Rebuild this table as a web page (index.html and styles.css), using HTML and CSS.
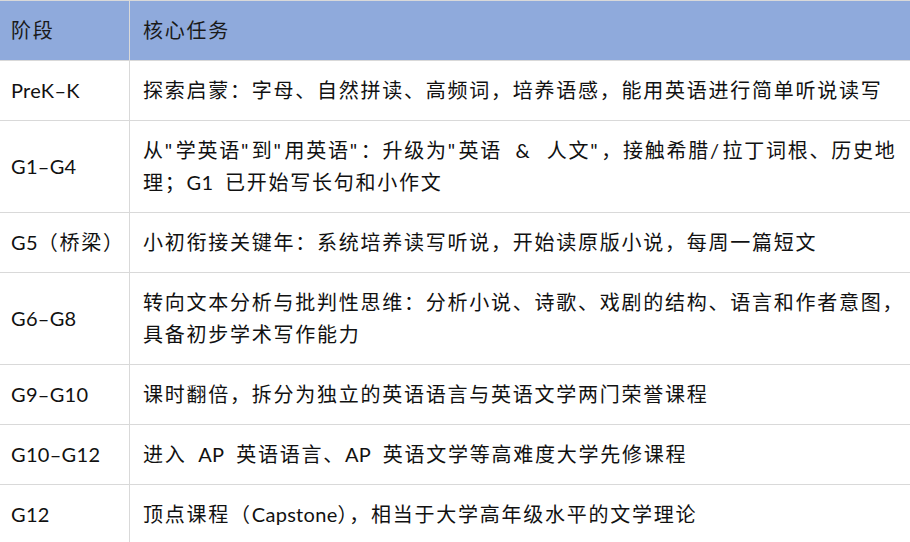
FILE: index.html
```html
<!DOCTYPE html>
<html lang="zh">
<head>
<meta charset="utf-8">
<link rel="stylesheet" href="styles.css">
</head>
<body>
<table class="plan">
  <thead>
    <tr><th class="stage">阶段</th><th class="task">核心任务</th></tr>
  </thead>
  <tbody>
    <tr><td class="stage"><span class="en">PreK–K</span></td><td class="task">探索启蒙：字母、自然拼读、高频词，培养语感，能用英语进行简单听说读写</td></tr>
    <tr><td class="stage"><span class="en">G1–G4</span></td><td class="task">从<span class="p">"</span>学英语<span class="p">"</span>到<span class="p">"</span>用英语<span class="p">"</span>：升级为<span class="p">"</span>英语<span class="p">&ensp;&amp;&ensp;</span>人文<span class="p">"</span>，接触希腊<span class="p">/</span>拉丁词根、历史地理；<span class="en">G1</span>&ensp;已开始写长句和小作文</td></tr>
    <tr><td class="stage"><span class="en">G5</span>（桥梁）</td><td class="task">小初衔接关键年：系统培养读写听说，开始读原版小说，每周一篇短文</td></tr>
    <tr><td class="stage"><span class="en">G6–G8</span></td><td class="task">转向文本分析与批判性思维：分析小说、诗歌、戏剧的结构、语言和作者意图，具备初步学术写作能力</td></tr>
    <tr><td class="stage"><span class="en">G9–G10</span></td><td class="task">课时翻倍，拆分为独立的英语语言与英语文学两门荣誉课程</td></tr>
    <tr><td class="stage"><span class="en">G10–G12</span></td><td class="task">进入&ensp;<span class="en">AP</span>&ensp;英语语言、<span class="en">AP</span>&ensp;英语文学等高难度大学先修课程</td></tr>
    <tr><td class="stage"><span class="en">G12</span></td><td class="task">顶点课程（<span class="en">Capstone</span>），相当于大学高年级水平的文学理论</td></tr>
  </tbody>
</table>
</body>
</html>
```
FILE: styles.css
```css
html, body {
  margin: 0;
  padding: 0;
  background: #ffffff;
}
.plan {
  border-collapse: collapse;
  width: 911px;
  table-layout: fixed;
  font-family: Lato, "Noto Sans CJK SC", sans-serif;
  font-size: 20px;
  line-height: 32px;
  color: #111111;
  letter-spacing: 1.75px;
}
.plan th, .plan td {
  border: 1px solid #d9d9d9;
  text-align: left;
  vertical-align: middle;
  font-weight: normal;
  padding: 13px 3px 14px 13px;
}
.plan thead th {
  background: #8faadc;
  color: #1a1a1a;
}
.plan th.stage, .plan td.stage {
  width: 114px;
  padding-left: 11px;
  padding-right: 4px;
  border-left: none;
  white-space: nowrap;
}
.en {
  letter-spacing: 0.3px;
}
.p {
  letter-spacing: 3.5px;
}
```
